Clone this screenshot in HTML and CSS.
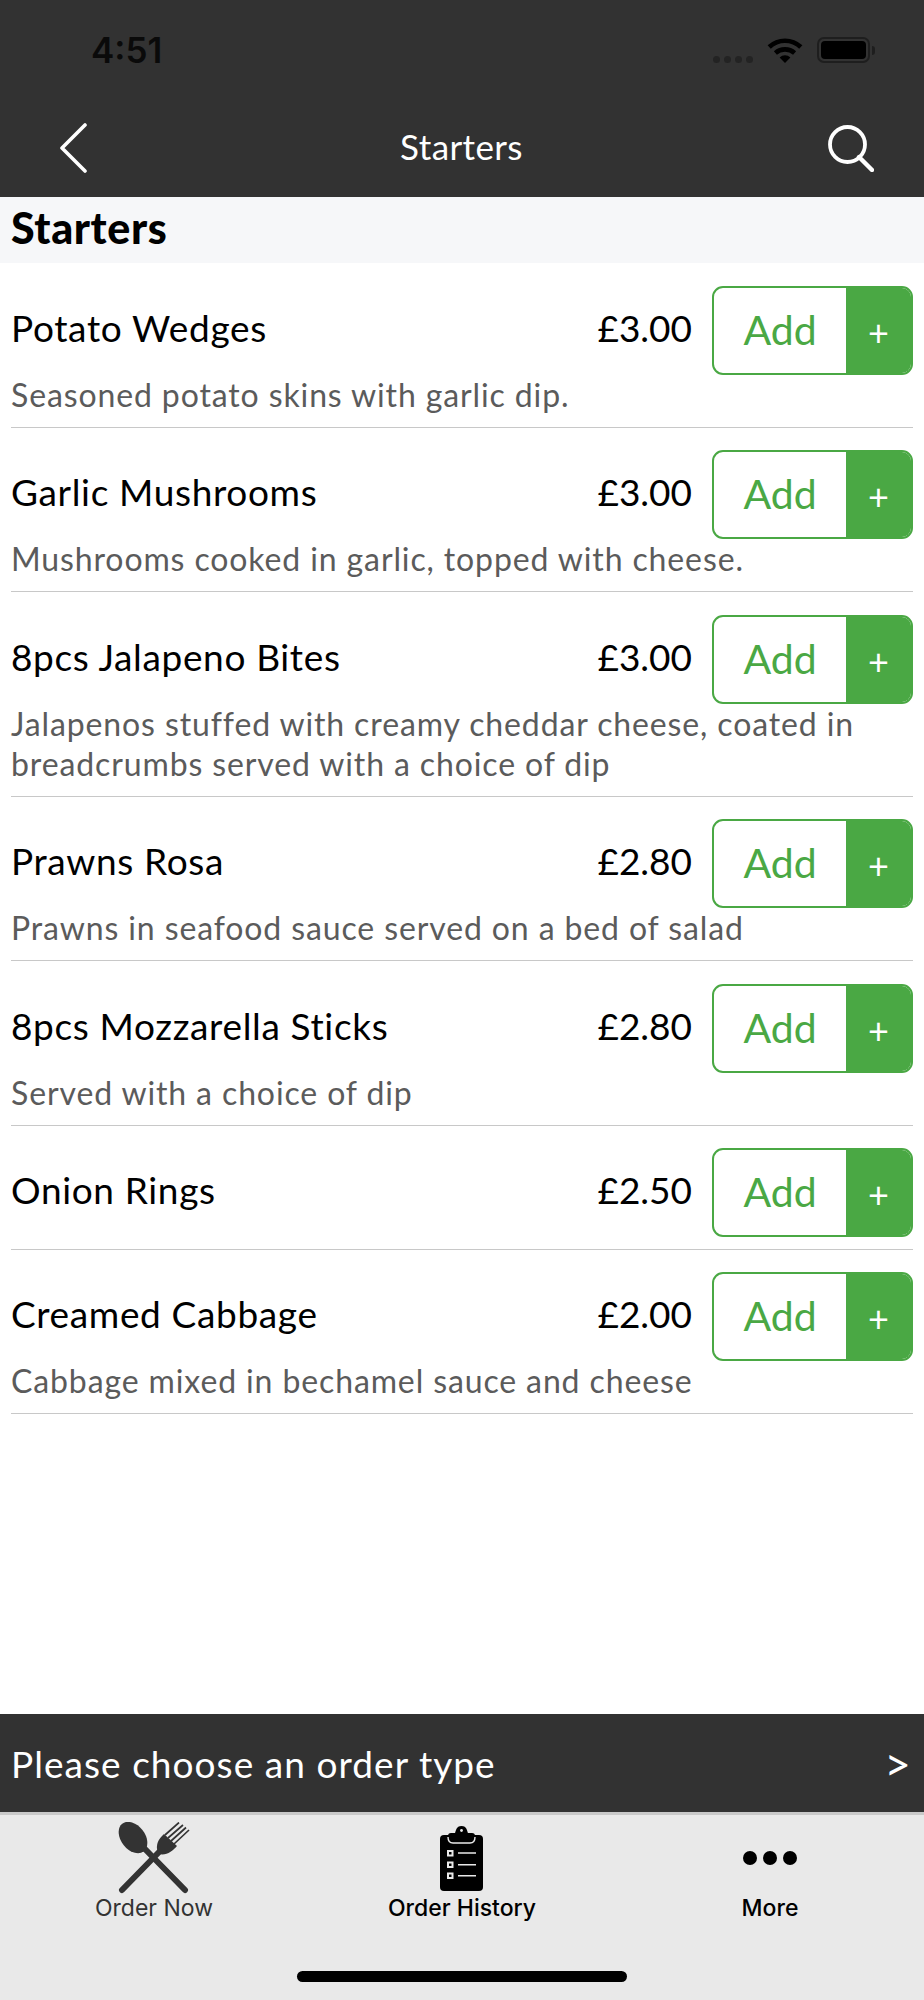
FILE: index.html
```html
<!DOCTYPE html>
<html lang="en">

<head>
    <meta charset="UTF-8">
    <meta name="viewport" content="width=device-width, initial-scale=1.0">
    <title>Starters</title>
    <link rel="stylesheet" href="styles.css">
</head>

<body>

    <div id="page">

        <div id="header">
            <div id="status-bar">
                <span class="clock">4:51</span>
                <div class="status-icons">
                    <div class="signal"><i></i><i></i><i></i><i></i></div>
                    <svg class="wifi" viewBox="0 0 36 26" width="36" height="26">
                        <path d="M2.2 10a23 23 0 0 1 31.6 0M8.4 16a14.5 14.5 0 0 1 19.2 0" fill="none" stroke="#000" stroke-width="4.6"/>
                        <path d="M12.6 20.4a8 8 0 0 1 10.8 0L18 26z" fill="#000"/>
                    </svg>
                    <div class="battery"><div class="battery-fill"></div></div>
                    <div class="battery-nub"></div>
                </div>
            </div>
            <div id="nav-bar">
                <svg class="nav-back" viewBox="0 0 28 50" width="28" height="50">
                    <path d="M26 2L3 25l23 23" fill="none" stroke="#fff" stroke-width="3.6" stroke-linecap="round" stroke-linejoin="round"/>
                </svg>
                <span class="nav-title">Starters</span>
                <svg class="nav-search" viewBox="0 0 46 47" width="46" height="47">
                    <circle cx="19.5" cy="19.5" r="17.5" fill="none" stroke="#fff" stroke-width="3.8"/>
                    <path d="M31 32l13 13" fill="none" stroke="#fff" stroke-width="4.4" stroke-linecap="round"/>
                </svg>
            </div>
        </div>

        <div class="section-title">Starters</div>

        <div id="menu-list">

            <div class="item">
                <div class="item-top">
                    <span class="item-name">Potato Wedges</span>
                    <span class="item-price">£3.00</span>
                    <div class="add-btn"><span class="add-label">Add</span><span class="add-plus">+</span></div>
                </div>
                <p class="item-desc">Seasoned potato skins with garlic dip.</p>
            </div>

            <div class="item">
                <div class="item-top">
                    <span class="item-name">Garlic Mushrooms</span>
                    <span class="item-price">£3.00</span>
                    <div class="add-btn"><span class="add-label">Add</span><span class="add-plus">+</span></div>
                </div>
                <p class="item-desc">Mushrooms cooked in garlic, topped with cheese.</p>
            </div>

            <div class="item">
                <div class="item-top">
                    <span class="item-name">8pcs Jalapeno Bites</span>
                    <span class="item-price">£3.00</span>
                    <div class="add-btn"><span class="add-label">Add</span><span class="add-plus">+</span></div>
                </div>
                <p class="item-desc">Jalapenos stuffed with creamy cheddar cheese, coated in<br>breadcrumbs served with a choice of dip</p>
            </div>

            <div class="item">
                <div class="item-top">
                    <span class="item-name">Prawns Rosa</span>
                    <span class="item-price">£2.80</span>
                    <div class="add-btn"><span class="add-label">Add</span><span class="add-plus">+</span></div>
                </div>
                <p class="item-desc">Prawns in seafood sauce served on a bed of salad</p>
            </div>

            <div class="item">
                <div class="item-top">
                    <span class="item-name">8pcs Mozzarella Sticks</span>
                    <span class="item-price">£2.80</span>
                    <div class="add-btn"><span class="add-label">Add</span><span class="add-plus">+</span></div>
                </div>
                <p class="item-desc">Served with a choice of dip</p>
            </div>

            <div class="item">
                <div class="item-top">
                    <span class="item-name">Onion Rings</span>
                    <span class="item-price">£2.50</span>
                    <div class="add-btn"><span class="add-label">Add</span><span class="add-plus">+</span></div>
                </div>
            </div>

            <div class="item">
                <div class="item-top">
                    <span class="item-name">Creamed Cabbage</span>
                    <span class="item-price">£2.00</span>
                    <div class="add-btn"><span class="add-label">Add</span><span class="add-plus">+</span></div>
                </div>
                <p class="item-desc">Cabbage mixed in bechamel sauce and cheese</p>
            </div>

        </div>

        <div id="order-bar">
            <span>Please choose an order type</span>
            <span class="order-arrow">&gt;</span>
        </div>

        <div id="tab-bar">
            <div class="tab tab-now">
                <svg class="tab-icon" viewBox="0 0 72 72" width="72" height="72">
                    <ellipse cx="15" cy="15.5" rx="12" ry="17.5" transform="rotate(-38 15 15.5)" fill="#333"/>
                    <path d="M26 26l41 42" fill="none" stroke="#333" stroke-width="6" stroke-linecap="round"/>
                    <path d="M4 68l40-41" fill="none" stroke="#333" stroke-width="6" stroke-linecap="round"/>
                    <path d="M41 32c-4-6-2-13 3-18l2-2 13 12c-4 5-11 10-18 8z" fill="#333"/>
                    <path d="M47 13L61 .5M50 16L65 3M53 19L68 5.5M56 22L71 8" fill="none" stroke="#333" stroke-width="1.7"/>
                </svg>
                <span class="tab-label">Order Now</span>
            </div>
            <div class="tab tab-history">
                <svg class="tab-icon tab-icon-history" viewBox="0 0 43 72" width="43" height="72">
                    <rect x="0" y="13" width="43" height="56" rx="4" fill="#000"/>
                    <path d="M8 20v-6c0-2 1-3 3-3h4c1-2 1-7 6.500-7s5.500 5 6.500 7h4c2 0 3 1 3 3v6z" fill="#000"/>
                    <path d="M8 15c0 5 2 6 5 6h17c3 0 5-1 5-6" fill="none" stroke="#e9e9e9" stroke-width="1.4"/>
                    <circle cx="21.500" cy="8.500" r="1.400" fill="#e9e9e9"/>
                    <path d="M7 28h6.500v6.500H7zM7 39.500h6.500V46H7zM7 50.500h6.500V57H7z" fill="#e9e9e9"/>
                    <path d="M9 30h2.500v2.500H9zM9 41.500h2.500V44H9zM9 52.500h2.500V55H9z" fill="#000"/>
                    <path d="M18 31h18M18 42.800h18M18 53.800h18" fill="none" stroke="#e9e9e9" stroke-width="1.600"/>
                </svg>
                <span class="tab-label">Order History</span>
            </div>
            <div class="tab tab-more">
                <div class="tab-dots"><i></i><i></i><i></i></div>
                <span class="tab-label">More</span>
            </div>
            <div class="home-indicator"></div>
        </div>

    </div>

</body>

</html>
```

FILE: styles.css
```css
body, html {
    margin: 0;
    padding: 0;
    height: 100%;
    overflow: hidden;
}

#page {
    display: flex;
    flex-direction: column;
    height: 100vh;
    background-color: white;
    font-family: 'Lato', 'Noto Sans', sans-serif;
}

#header {
    height: 197px;
    background-color: #323232;
    flex-shrink: 0;
    box-sizing: border-box;
}

#status-bar {
    height: 101px;
    display: flex;
    justify-content: space-between;
    align-items: flex-start;
}

.clock {
    font-family: 'Inter', sans-serif;
    font-size: 35px;
    font-weight: 600;
    line-height: 42px;
    color: #0a0a0a;
    margin: 29px 0 0 91px;
}

.status-icons {
    display: flex;
    align-items: center;
    margin: 37px 49px 0 0;
}

.signal {
    display: flex;
    gap: 4px;
    align-self: flex-end;
    margin-right: 14px;
}

    .signal i {
        width: 7px;
        height: 7px;
        border-radius: 50%;
        background-color: #232323;
    }

.battery {
    width: 53px;
    height: 26px;
    margin-left: 14px;
    padding: 2px;
    box-sizing: border-box;
    border: 2px solid #1e1e1e;
    border-radius: 7px;
}

.battery-fill {
    height: 100%;
    background-color: #000;
    border-radius: 4px;
}

.battery-nub {
    width: 3px;
    height: 9px;
    margin-left: 2px;
    background-color: #1e1e1e;
    border-radius: 0 3px 3px 0;
}

#nav-bar {
    display: flex;
    align-items: center;
    justify-content: space-between;
    height: 96px;
    padding: 0 50px 0 59px;
}

.nav-title {
    font-size: 35px;
    line-height: 1;
    color: white;
    margin: -6px 0 0 8px;
    letter-spacing: 0.4px;
}

.nav-back {
    margin-top: -2px;
}

.nav-search {
    margin-top: -2px;
}

.section-title {
    height: 66px;
    line-height: 62px;
    padding-left: 11px;
    background-color: #f6f7f9;
    font-size: 43px;
    font-weight: 900;
    letter-spacing: 0.6px;
    color: black;
    flex-shrink: 0;
}

#menu-list {
    flex: 1;
    padding: 0.7px 11px 0;
}

.item {
    padding: 22.3px 0 12.1px;
    border-bottom: 1px solid #c8c8c8;
}

.item-top {
    display: flex;
    align-items: center;
}

.item-name {
    flex: 1;
    font-size: 37px;
    line-height: 44px;
    margin-top: -5px;
    letter-spacing: 0.65px;
    color: black;
}

.item-price {
    font-size: 37px;
    line-height: 44px;
    margin: -5px 20px 0 0;
    color: black;
}

.add-btn {
    display: flex;
    width: 201px;
    height: 89px;
    box-sizing: border-box;
    border: 2px solid #4aa844;
    border-radius: 11px;
    overflow: hidden;
}

.add-label {
    flex: 1;
    display: flex;
    align-items: center;
    justify-content: center;
    padding-bottom: 2px;
    font-size: 41px;
    color: #4aa844;
}

.add-plus {
    width: 65px;
    display: flex;
    align-items: center;
    justify-content: center;
    padding-top: 3px;
    box-sizing: border-box;
    background-color: #4aa844;
    color: white;
    font-size: 36px;
}

.item-desc {
    margin: 0;
    font-size: 32px;
    line-height: 40px;
    letter-spacing: 0.88px;
    color: #5b5b5b;
}

#order-bar {
    height: 98px;
    flex-shrink: 0;
    display: flex;
    align-items: center;
    justify-content: space-between;
    padding: 0 13px 0 11px;
    background-color: #323232;
    color: white;
    font-size: 37px;
    letter-spacing: 1.05px;
}

.order-arrow {
    font-size: 46px;
    letter-spacing: 0;
}

#tab-bar {
    position: relative;
    height: 188px;
    flex-shrink: 0;
    box-sizing: border-box;
    display: flex;
    border-top: 3px solid #c9c9c9;
    background-color: #e9e9e9;
}

.tab {
    flex: 1;
    display: flex;
    flex-direction: column;
    align-items: center;
    padding-top: 7px;
}

.tab-icon {
    display: block;
}

.tab-icon-history {
    margin-right: 2px;
}

.tab-label {
    font-family: 'Inter', sans-serif;
    font-size: 23px;
    line-height: 26px;
    margin-top: 1px;
}

.tab-now .tab-label {
    color: #333;
    font-weight: 400;
}

.tab-history .tab-label,
.tab-more .tab-label {
    color: black;
    font-weight: 500;
}

.tab-dots {
    display: flex;
    gap: 6px;
    height: 72px;
    align-items: center;
}

    .tab-dots i {
        width: 14px;
        height: 14px;
        border-radius: 50%;
        background-color: black;
    }

/* sits over the tab bar */
.home-indicator {
    position: absolute;
    left: 297px;
    bottom: 18px;
    width: 330px;
    height: 11px;
    border-radius: 6px;
    background-color: black;
}
```
